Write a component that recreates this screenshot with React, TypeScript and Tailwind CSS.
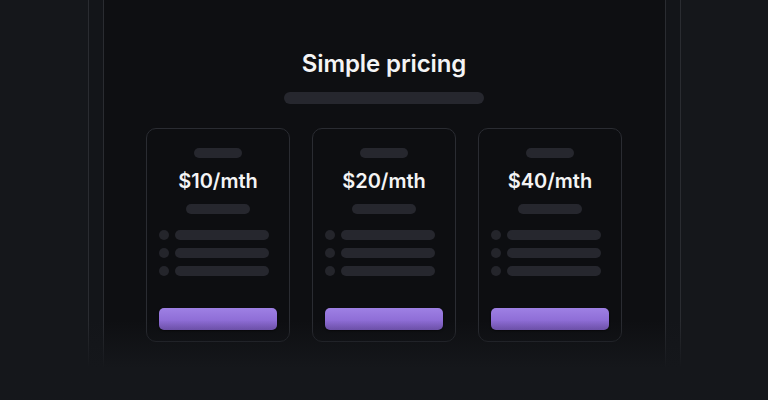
import React from 'react';

const plans = ['$10/mth', '$20/mth', '$40/mth'];

const PlanCard: React.FC<{ price: string }> = ({ price }) => (
  <div className="w-[144px] h-[214px] rounded-[10px] border border-[#2a2c32] bg-[#0d0e11] px-[12px] pt-[19px] flex flex-col items-center">
    <div className="w-[48px] h-[10px] rounded-full bg-[#26272e]" />
    <div className="mt-[9px] text-[20px] leading-[28px] font-semibold text-[#f4f4f5]">{price}</div>
    <div className="mt-[9px] w-[64px] h-[10px] rounded-full bg-[#26272e]" />
    <div className="mt-[16px] flex flex-col gap-[8px] w-full">
      {[0, 1, 2].map((i) => (
        <div key={i} className="flex items-center gap-[6px]">
          <div className="w-[10px] h-[10px] rounded-full bg-[#24252b]" />
          <div className="w-[94px] h-[10px] rounded-full bg-[#26272e]" />
        </div>
      ))}
    </div>
    <div className="mt-[32px] w-full h-[22px] rounded-[5px] bg-gradient-to-b from-[#9e80e4] to-[#835fcc] shadow-[0_1px_2px_rgba(0,0,0,0.7)]" />
  </div>
);

const App: React.FC = () => {
  return (
    <div
      className="relative w-[768px] h-[400px] overflow-hidden bg-[#15171b] flex justify-center"
      style={{ fontFamily: 'Inter, "Noto Sans", sans-serif' }}
    >
      <div className="w-[16px] h-full border-x border-[#2a2c31] bg-[#131519]" />
      <div className="w-[561px] h-full bg-[#0e0f12] flex flex-col items-center pt-[48px]">
        <h2 className="text-[24px] leading-[32px] font-semibold text-[#f4f4f5] tracking-[-0.1px]">Simple pricing</h2>
        <div className="mt-[12px] w-[200px] h-[12px] rounded-full bg-[#26272e]" />
        <div className="mt-[24px] flex gap-[22px]">
          {plans.map((p) => (
            <PlanCard key={p} price={p} />
          ))}
        </div>
      </div>
      <div className="w-[16px] h-full border-x border-[#2a2c31] bg-[#131519]" />
      <div className="absolute left-0 right-0 bottom-0 h-[80px] bg-gradient-to-b from-transparent via-[#15171b] via-60% to-[#15171b]" />
    </div>
  );
};

export default App;
